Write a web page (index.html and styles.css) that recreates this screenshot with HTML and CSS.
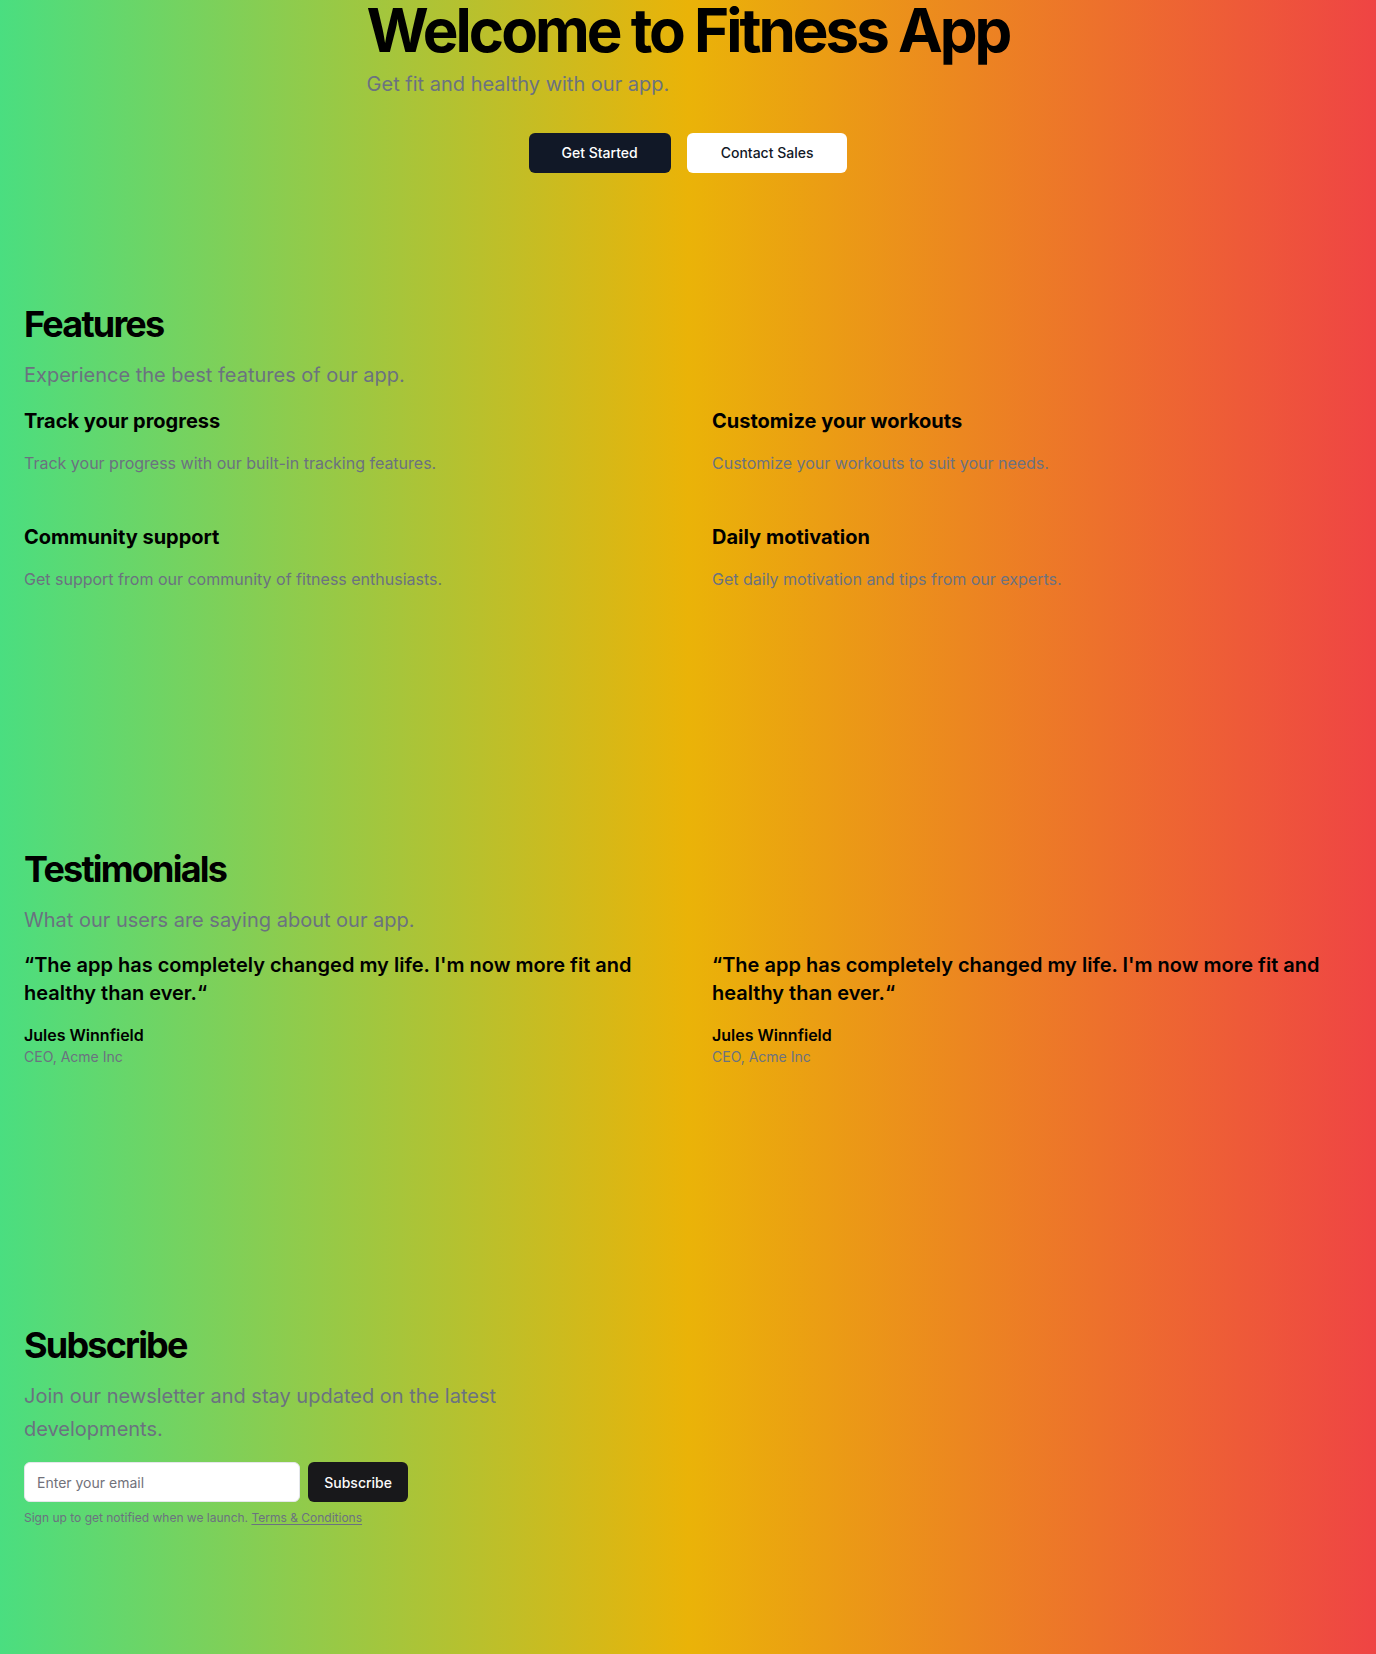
FILE: index.html
```html
<!DOCTYPE html>
<html lang="en">
<head>
<meta charset="utf-8">
<title>Fitness App</title>
<link rel="stylesheet" href="styles.css">
</head>
<body>
<main class="page">
  <section class="hero">
    <div class="hero-text">
      <h1 class="hero-title">Welcome to Fitness App</h1>
      <p class="hero-sub">Get fit and healthy with our app.</p>
    </div>
    <div class="hero-actions">
      <a class="btn btn-dark" href="#">Get Started</a>
      <a class="btn btn-light" href="#">Contact Sales</a>
    </div>
  </section>

  <section class="section section-first">
    <div class="section-inner">
      <h2 class="section-title">Features</h2>
      <p class="section-sub">Experience the best features of our app.</p>
      <div class="grid">
        <div class="feature">
          <h3 class="feature-title">Track your progress</h3>
          <p class="feature-desc">Track your progress with our built-in tracking features.</p>
        </div>
        <div class="feature">
          <h3 class="feature-title">Customize your workouts</h3>
          <p class="feature-desc">Customize your workouts to suit your needs.</p>
        </div>
        <div class="feature">
          <h3 class="feature-title">Community support</h3>
          <p class="feature-desc">Get support from our community of fitness enthusiasts.</p>
        </div>
        <div class="feature">
          <h3 class="feature-title">Daily motivation</h3>
          <p class="feature-desc">Get daily motivation and tips from our experts.</p>
        </div>
      </div>
    </div>
  </section>

  <section class="section">
    <div class="section-inner">
      <h2 class="section-title">Testimonials</h2>
      <p class="section-sub">What our users are saying about our app.</p>
      <div class="grid">
        <div class="testimonial">
          <blockquote class="quote">“The app has completely changed my life. I'm now more fit and healthy than ever.“</blockquote>
          <div class="author">
            <div class="author-name">Jules Winnfield</div>
            <div class="author-role">CEO, Acme Inc</div>
          </div>
        </div>
        <div class="testimonial">
          <blockquote class="quote">“The app has completely changed my life. I'm now more fit and healthy than ever.“</blockquote>
          <div class="author">
            <div class="author-name">Jules Winnfield</div>
            <div class="author-role">CEO, Acme Inc</div>
          </div>
        </div>
      </div>
    </div>
  </section>

  <section class="section section-last">
    <div class="section-inner">
      <h2 class="section-title">Subscribe</h2>
      <p class="section-sub section-sub-narrow">Join our newsletter and stay updated on the latest developments.</p>
      <div class="subscribe">
        <form class="subscribe-form">
          <input class="email" type="email" placeholder="Enter your email">
          <button class="btn-sub" type="submit">Subscribe</button>
        </form>
        <p class="fineprint">Sign up to get notified when we launch. <a class="terms" href="#">Terms &amp; Conditions</a></p>
      </div>
    </div>
  </section>
</main>
</body>
</html>
```

FILE: styles.css
```css
* {
  box-sizing: border-box;
}

html,
body {
  margin: 0;
  padding: 0;
}

body {
  font-family: Inter, "Noto Sans", sans-serif;
  color: #000;
}

.page {
  min-height: 1654px;
  background: linear-gradient(to right, #4ade80, #eab308, #ef4444);
}

.hero {
  display: flex;
  flex-direction: column;
  align-items: center;
}

.hero-text {
  display: flex;
  flex-direction: column;
}

.hero-title {
  margin: 0;
  font-size: 60px;
  line-height: 60px;
  font-weight: 700;
  letter-spacing: -0.05em;
}

.hero-sub {
  margin: 8px 0 0;
  font-size: 20px;
  line-height: 32.5px;
  color: #6b7280;
}

.hero-actions {
  display: flex;
  gap: 16px;
  margin-top: 32.5px;
}

.btn {
  display: inline-flex;
  align-items: center;
  justify-content: center;
  height: 40px;
  padding: 0 33px;
  border-radius: 6px;
  font-size: 14px;
  line-height: 20px;
  font-weight: 500;
  text-decoration: none;
}

.btn-dark {
  background: #111827;
  color: #fff;
}

.btn-light {
  background: #fff;
  color: #111827;
  padding: 0 34px;
}

.section {
  padding: 129px 24px;
}

.section-first {
  padding-top: 131px;
}

.section-last {
  padding-bottom: 128px;
}

.section-inner {
  display: flex;
  flex-direction: column;
  gap: 15px;
}

.section-title {
  margin: 0;
  font-size: 36px;
  line-height: 40px;
  font-weight: 700;
  letter-spacing: -0.05em;
}

.section-sub {
  margin: 0;
  font-size: 20px;
  line-height: 32.5px;
  color: #6b7280;
}

.section-sub-narrow {
  max-width: 600px;
}

.grid {
  display: grid;
  grid-template-columns: 1fr 1fr;
  gap: 48px;
}

.feature {
  display: flex;
  flex-direction: column;
  gap: 16px;
}

.feature-title {
  margin: 0;
  font-size: 20px;
  line-height: 28px;
  font-weight: 700;
}

.feature-desc {
  margin: 0;
  font-size: 16px;
  line-height: 24px;
  color: #6b7280;
}

.testimonial {
  display: flex;
  flex-direction: column;
  gap: 16px;
}

.quote {
  margin: 0;
  font-size: 20px;
  line-height: 28px;
  font-weight: 600;
}

.author-name {
  font-size: 16px;
  line-height: 24px;
  font-weight: 600;
}

.author-role {
  font-size: 14px;
  line-height: 20px;
  color: #6b7280;
}

.subscribe {
  display: flex;
  flex-direction: column;
  gap: 8px;
  max-width: 384px;
  margin-top: 2px;
}

.subscribe-form {
  display: flex;
  gap: 8px;
  margin: 0;
}

.email {
  flex: 1;
  min-width: 0;
  height: 40px;
  padding: 0 12px;
  border: 1px solid #e5e7eb;
  border-radius: 6px;
  background: #fff;
  font-family: Inter, "Noto Sans", sans-serif;
  font-size: 14px;
  color: #111827;
}

.email::placeholder {
  color: #71717a;
}

.btn-sub {
  height: 40px;
  padding: 0 16px;
  border: 0;
  border-radius: 6px;
  background: #18181b;
  color: #fafafa;
  font-family: Inter, "Noto Sans", sans-serif;
  font-size: 14px;
  font-weight: 500;
}

.fineprint {
  margin: 0;
  font-size: 12px;
  line-height: 16px;
  color: #6b7280;
}

.terms {
  color: #6b7280;
  text-decoration: underline;
  text-underline-offset: 2px;
}
```
